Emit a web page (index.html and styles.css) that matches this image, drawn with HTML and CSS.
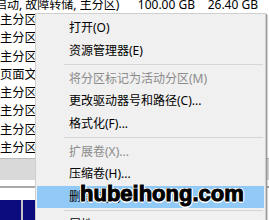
FILE: index.html
```html
<!DOCTYPE html>
<html lang="zh-CN">
<head>
<meta charset="utf-8">
<link rel="stylesheet" href="styles.css">
</head>
<body>
<div class="screen">
  <div class="list">
    <div class="toprow">
      <span class="c1">启动, 故障转储, 主分区)</span>
      <span class="c2">100.00 GB</span>
      <span class="c3">26.40 GB</span>
    </div>
    <div class="row">主分区</div>
    <div class="row">主分区</div>
    <div class="row">主分区</div>
    <div class="row">页面文件</div>
    <div class="row">主分区</div>
    <div class="row">主分区</div>
    <div class="row">主分区</div>
    <div class="row">主分区</div>
  </div>
  <div class="hscroll"></div>
  <div class="gap"><div class="rule"></div></div>
  <div class="disks">
    <div class="blk a"></div>
    <div class="div"></div>
    <div class="blk b"></div>
  </div>

  <div class="menu">
    <div class="item">打开(O)</div>
    <div class="item">资源管理器(E)</div>
    <div class="sep"></div>
    <div class="item dis">将分区标记为活动分区(M)</div>
    <div class="item">更改驱动器号和路径(C)...</div>
    <div class="item">格式化(F)...</div>
    <div class="sep"></div>
    <div class="item dis">扩展卷(X)...</div>
    <div class="item">压缩卷(H)...</div>
    <div class="item hi">删除卷(D)...</div>
    <div class="sep"></div>
    <div class="item">属性(P)</div>
  </div>
  <div class="watermark">hubeihong.com</div>
</div>
</body>
</html>
```

FILE: styles.css
```css
html, body {
  margin: 0;
  padding: 0;
  background: #ffffff;
}
.screen {
  position: relative;
  width: 269px;
  height: 220px;
  overflow: hidden;
  font-family: "Noto Sans", "Noto Sans CJK SC", sans-serif;
  font-size: 12px;
  color: #000;
}
.list {
  display: flex;
  flex-direction: column;
}
.toprow {
  height: 11px;
  display: flex;
  align-items: center;
  white-space: nowrap;
  line-height: 11px;
}
.toprow .c1 {
  width: 140px;
  margin-left: -5px;
  flex: none;
  position: relative;
  top: -1px;
}
.toprow .c2 {
  width: 60px;
  text-align: right;
  flex: none;
  position: relative;
  top: -1px;
}
.toprow .c3 {
  width: 63px;
  text-align: right;
  flex: none;
  position: relative;
  top: -1px;
}
.row {
  height: 18.3px;
  line-height: 18.3px;
  white-space: nowrap;
  font-size: 12.3px;
}
.hscroll {
  margin-top: 1px;
  height: 21px;
  background: #d9d9d9;
  border-top: 1px solid #b9b9b9;
}
.gap {
  height: 20px;
  padding-top: 6px;
  box-sizing: border-box;
}
.rule {
  height: 2px;
  background: #a9a9a9;
}
.disks {
  display: flex;
  height: 20px;
}
.blk {
  background: #0b0b7e;
}
.blk.a { width: 21px; }
.blk.b { width: 14px; }
.div {
  width: 2px;
  background: #c4c4c4;
}

.menu {
  position: absolute;
  left: 35px;
  top: 13px;
  width: 227px;
  height: 230px;
  background: #f0f0f0;
  border: 1px solid #cfcfcf;
  box-shadow: 1px 1px 0 #9a9a9a, 2px 2px 1px rgba(0,0,0,0.15);
  padding: 3px 1px;
  display: flex;
  flex-direction: column;
}
.item {
  height: 22.5px;
  line-height: 22.5px;
  padding-left: 32px;
  white-space: nowrap;
  flex: none;
}
.item.dis {
  color: #8b8b8b;
}
.item.hi {
  background: #91c9f7;
}
.sep {
  height: 5.5px;
  flex: none;
  display: flex;
  align-items: center;
  padding-left: 27px;
}
.sep::before {
  content: "";
  flex: 1;
  height: 1px;
  background: #d5d5d5;
  margin-right: 1px;
}
.watermark {
  position: absolute;
  left: 80px;
  top: 182px;
  font-family: "Liberation Sans", Arial, sans-serif;
  font-weight: bold;
  font-size: 22px;
  line-height: 24px;
  color: #000;
  -webkit-text-stroke: 1px #000;
  letter-spacing: 0;
  text-shadow:
    1.5px 0 0 #fff, -1.5px 0 0 #fff, 0 1.5px 0 #fff, 0 -1.5px 0 #fff,
    1.2px 1.2px 0 #fff, -1.2px 1.2px 0 #fff, 1.2px -1.2px 0 #fff, -1.2px -1.2px 0 #fff;
}
```
